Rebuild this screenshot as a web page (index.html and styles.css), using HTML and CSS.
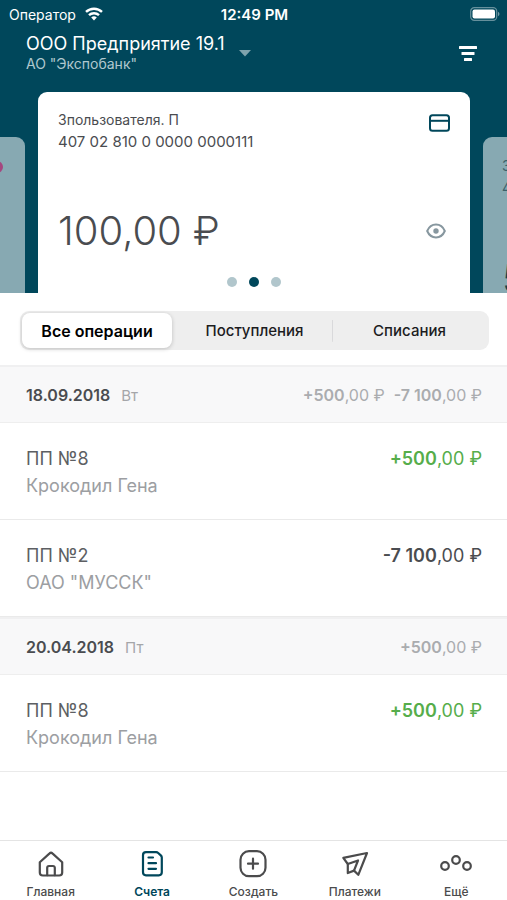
FILE: index.html
```html
<!DOCTYPE html>
<html lang="ru">
<head>
<meta charset="utf-8">
<meta name="viewport" content="width=device-width, initial-scale=1">
<title>Счета</title>
<link rel="stylesheet" href="styles.css">
</head>
<body>
<div class="app">
  <header class="hero">
    <div class="status">
      <div class="carrier">Оператор
        <svg width="18" height="14" viewBox="0 0 18 14" fill="none" stroke="#fff" stroke-width="2.4"><path d="M1 4.900a11.600 11.600 0 0 1 16 0M4 8.200a7.200 7.200 0 0 1 10 0"/><path d="M9 13.400 6.200 10.600a4 4 0 0 1 5.600 0z" fill="#fff" stroke="none"/></svg>
      </div>
      <time class="clock">12:49 PM</time>
      <svg class="battery" width="30" height="14" viewBox="0 0 30 14"><rect x=".7" y=".7" width="26" height="12.600" rx="3.600" fill="none" stroke="#fff" stroke-opacity=".4" stroke-width="1.2"/><rect x="2.500" y="2.500" width="22.500" height="9" rx="2" fill="#fff"/><path d="M28 4.800c2 .8 2 3.600 0 4.400z" fill="#fff" fill-opacity=".45"/></svg>
    </div>
    <div class="topbar">
      <button class="company" type="button">
        <span class="company-text"><span class="company-name">ООО Предприятие 19.1</span><span class="company-bank">АО "Экспобанк"</span></span>
        <svg class="caret" width="12" height="7" viewBox="0 0 12 7"><path d="M0 0h12L6 6.500z" fill="#7fa3ad"/></svg>
      </button>
      <button class="icon-button" type="button" aria-label="Фильтр">
        <svg width="18" height="17" viewBox="0 0 18 17" fill="#fff"><rect y="1" width="18" height="3" rx=".5"/><rect x="2.500" y="7" width="13" height="3" rx=".5"/><rect x="5" y="13" width="8" height="3" rx=".5"/></svg>
      </button>
    </div>
    <div class="carousel">
      <div class="peek peek-left"><span class="mark"></span></div>
      <section class="card">
        <div class="card-row card-head">
          <div class="account"><div>Зпользователя. П</div><div class="account-number">407 02 810 0 0000 0000111</div></div>
          <svg width="21" height="18" viewBox="0 0 21 18" fill="none" stroke="#00475b" stroke-width="2"><rect x="1" y="1.200" width="19" height="15.600" rx="2.500"/><path d="M1 6.800h19"/></svg>
        </div>
        <div class="card-row balance-row">
          <div class="balance">100,00 ₽</div>
          <button class="icon-button" type="button" aria-label="Скрыть баланс">
            <svg width="20" height="16" viewBox="0 0 20 16"><path d="M1.200 8C3 3.800 6 1.600 10 1.600S17 3.800 18.800 8C17 12.200 14 14.400 10 14.400S3 12.200 1.200 8z" fill="none" stroke="#87979f" stroke-width="2"/><circle cx="10" cy="8" r="2.700" fill="#87979f"/></svg>
          </button>
        </div>
        <div class="dots"><i class="dot"></i><i class="dot dot-on"></i><i class="dot"></i></div>
      </section>
      <div class="peek peek-right"><div class="account"><div>З</div><div>4</div></div><div class="peek-balance">5</div></div>
    </div>
  </header>

  <main>
    <div class="segments">
      <button class="segment segment-on" type="button">Все операции</button>
      <button class="segment" type="button">Поступления</button>
      <button class="segment segment-split" type="button">Списания</button>
    </div>

    <section>
      <div class="day"><div><b class="date">18.09.2018</b><span class="weekday">Вт</span></div><div class="totals"><span><b>+500</b>,00 ₽</span><span><b>-7 100</b>,00 ₽</span></div></div>
      <div class="operation"><div><div class="op-title">ПП №8</div><div class="op-party">Крокодил Гена</div></div><div class="amount amount-in"><b>+500</b>,00 ₽</div></div>
      <div class="operation"><div><div class="op-title">ПП №2</div><div class="op-party">ОАО "МУССК"</div></div><div class="amount"><b>-7 100</b>,00 ₽</div></div>
    </section>
    <section>
      <div class="day"><div><b class="date">20.04.2018</b><span class="weekday">Пт</span></div><div class="totals"><span><b>+500</b>,00 ₽</span></div></div>
      <div class="operation"><div><div class="op-title">ПП №8</div><div class="op-party">Крокодил Гена</div></div><div class="amount amount-in"><b>+500</b>,00 ₽</div></div>
    </section>
  </main>

  <nav class="tabs">
    <a class="tab" href="#home"><svg width="28" height="28" viewBox="0 0 28 28"><path d="M2.800 12.200 12.600 3.400a2 2 0 0 1 2.800 0l9.800 8.800v10.300a3 3 0 0 1-3 3H5.800a3 3 0 0 1-3-3z"/><path d="M10.200 25.200v-7.400a1.800 1.800 0 0 1 1.800-1.800h4a1.800 1.800 0 0 1 1.800 1.800v7.400"/></svg>Главная</a>
    <a class="tab tab-on" href="#accounts"><svg width="28" height="28" viewBox="0 0 28 28"><path d="M8 2.200h10.200a3 3 0 0 1 2 .8l2.600 2.400a3 3 0 0 1 1 2.200V22.300a3 3 0 0 1-3 3H8a3 3 0 0 1-3-3V5.200a3 3 0 0 1 3-3z"/><path d="M10.500 7.500h4.500M10.500 13.200h7.500M10.500 18.800h7.500"/></svg>Счета</a>
    <a class="tab" href="#create"><svg width="28" height="28" viewBox="0 0 28 28"><rect x="1.500" y="1.200" width="25" height="25" rx="8.500"/><path d="M14 8.700v10M9 13.700h10"/></svg>Создать</a>
    <a class="tab" href="#payments"><svg width="28" height="28" viewBox="0 0 28 28"><path d="M2.300 7.800 26 3 17.300 24.800 13 20.600 6.800 23V14z"/><path d="M6.800 14l10.200-3.500-4 10.100"/></svg>Платежи</a>
    <a class="tab" href="#more"><svg width="34" height="28" viewBox="0 0 34 28"><circle cx="6" cy="16" r="3.800"/><circle cx="17" cy="10" r="3.800"/><circle cx="28" cy="16" r="3.800"/></svg>Ещё</a>
  </nav>
</div>
</body>
</html>
```
FILE: styles.css
```css
* { box-sizing: border-box; }
body { margin: 0; background: #fff; color: #4a4c50; font-family: Inter, "Liberation Sans", sans-serif; }
button { margin: 0; padding: 0; border: 0; background: none; color: inherit; font: inherit; }
svg { display: block; flex: none; }
b { font-weight: 600; }
.app { display: flex; flex-direction: column; min-height: 100vh; }
main { flex: 1; }

.hero { background: #00475b; color: #fff; overflow: hidden; }
.status { display: grid; grid-template-columns: 1fr auto 1fr; align-items: center; height: 28px; padding: 0 7px 0 9px; font-size: 14px; }
.carrier { display: flex; align-items: center; gap: 9px; }
.clock { font-size: 15px; font-weight: 600; }
.battery { justify-self: end; }
.topbar { display: flex; justify-content: space-between; align-items: center; height: 50px; margin-bottom: 14px; padding: 0 30px 0 26px; }
.company { display: flex; align-items: center; gap: 14px; text-align: left; }
.company-text { display: flex; flex-direction: column; }
.company-name { font-size: 18px; line-height: 22px; }
.company-bank { color: #b0c8cf; font-size: 14px; line-height: 18px; }
.caret { }
.carousel { display: flex; align-items: flex-end; gap: 13px; }
.peek { flex: none; width: 24px; height: 156px; background: #87a9b2; overflow: hidden; }
.peek-left { display: flex; justify-content: flex-start; width: 25px; padding-top: 24px; border-radius: 0 9px 0 0; }
.mark { width: 12px; height: 12px; margin-left: -9px; border-radius: 50%; background: #a5477f; }
.peek-right { padding: 18px 0 0 19px; border-radius: 9px 0 0 0; color: #3a5f69; }
.peek-balance { margin-top: 56px; color: #1d3c46; font-size: 40px; line-height: 48px; }
.card { flex: 1; padding: 17px 20px 0; background: #fff; border-radius: 9px 9px 0 0; color: #4a4c50; }
.card-row { display: flex; justify-content: space-between; align-items: center; }
.card-head { align-items: flex-start; }
.card-head svg { margin-top: 5px; }
.account { font-size: 14px; line-height: 22px; }
.account-number { font-size: 15px; }
.balance-row { margin-top: 54px; padding-right: 4px; }
.balance { font-size: 40px; font-weight: 300; line-height: 48px; }
.dots { display: flex; justify-content: center; gap: 12px; margin-top: 22px; padding-bottom: 6px; }
.dot { width: 10px; height: 10px; border-radius: 50%; background: #b1c6cc; }
.dot-on { background: #00475b; }

.segments { display: grid; grid-template-columns: 1fr 1fr 1fr; margin: 18px 18px 15px 20px; padding: 2px; border-radius: 9px; background: #eee; }
.segment { height: 35px; border-radius: 8px; color: #1c1c1e; font-size: 15px; font-weight: 500; }
.segment-on { margin-right: 5px; background: #fff; box-shadow: 0 1px 4px #0003; color: #000; font-size: 16px; font-weight: 600; }
.segment-split { background: linear-gradient(#d9d9db, #d9d9db) 0 50% / 1px 22px no-repeat; }

.day { display: flex; justify-content: space-between; align-items: center; height: 58px; padding: 0 25px 0 26px; border-top: 2px solid #f0f0f1; border-bottom: 1px solid #eee; background: #f8f8f9; font-size: 16px; }
.weekday { margin-left: 11px; color: #a5a6a9; font-size: 15px; }
.totals { display: flex; gap: 9px; color: #aaacaf; }
.operation { display: flex; justify-content: space-between; align-items: flex-start; height: 97px; padding: 22px 25px 0 26px; border-bottom: 1px solid #eaeaea; font-size: 18px; line-height: 27px; }
.op-title { color: #5d5f63; }
.op-party { color: #9c9ea2; }
.amount-in { color: #56ad4b; }

.tabs { display: grid; grid-template-columns: repeat(5, 1fr); height: 60px; padding-top: 9px; border-top: 1px solid #e4e4e4; }
.tab { display: flex; flex-direction: column; align-items: center; gap: 6px; color: #4b4b4c; font-size: 12px; font-weight: 500; line-height: 16px; text-decoration: none; }
.tab svg { fill: none; stroke: currentColor; stroke-width: 2.2; stroke-linejoin: round; stroke-linecap: round; }
.tab-on { color: #00475b; font-weight: 600; }
```
